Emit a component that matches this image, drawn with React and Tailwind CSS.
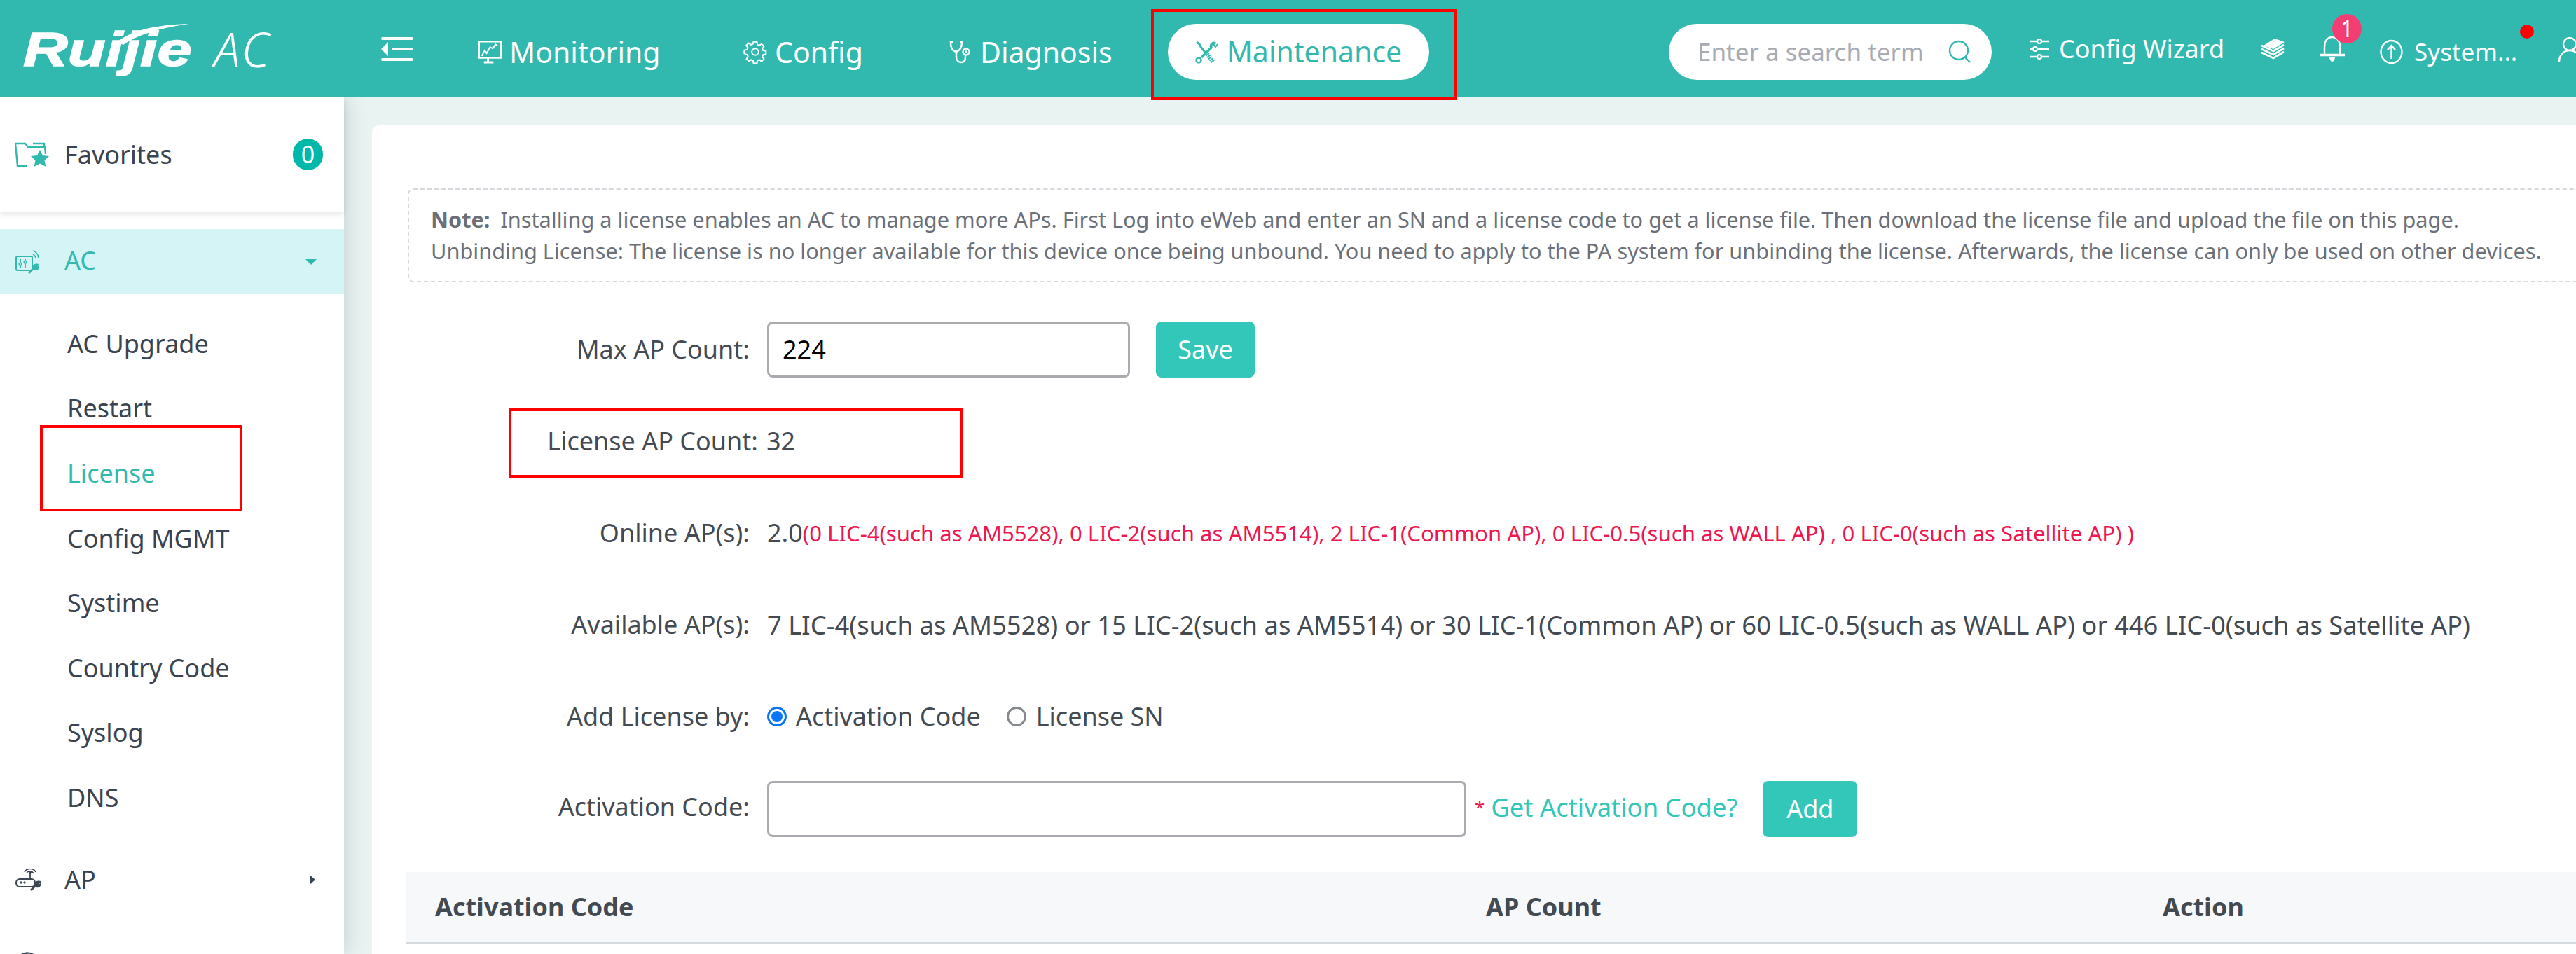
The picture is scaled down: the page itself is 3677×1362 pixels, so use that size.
import React from "react";

const Ico = ({ w, h, vb, children, className = "" }) => (
  <svg width={w} height={h} viewBox={vb} fill="none" stroke="currentColor" className={`shrink-0 ${className}`}>{children}</svg>
);

const MonitorIcon = () => (
  <Ico w={33} h={33} vb="0 0 34 33">
    <path d="M1 1h32v24H1z" strokeWidth="2" />
    <path d="M5 22l4-8 3 4 5-9 4 2 4-6 3 2" strokeWidth="2" />
    <path d="M14 25v5M8 31.500h14" strokeWidth="3" />
  </Ico>
);
const GearIcon = () => (
  <Ico w={34} h={34} vb="0 0 24 24">
    <circle cx="12" cy="12" r="3.4" strokeWidth="1.4" />
    <path strokeWidth="1.4" d="M10.3 2h3.4l.5 2.8 1.9.8 2.3-1.6 2.4 2.4-1.6 2.3.8 1.9 2.8.5v3.4l-2.8.5-.8 1.9 1.6 2.3-2.4 2.4-2.3-1.6-1.9.8-.5 2.8h-3.4l-.5-2.8-1.9-.8-2.3 1.6-2.4-2.4 1.6-2.3-.8-1.9L1 13.700v-3.4l2.8-.5.8-1.9L3 5.600 5.400 3.200l2.300 1.600 1.900-.8z" />
  </Ico>
);
const StethoIcon = () => (
  <Ico w={34} h={34} vb="0 0 34 34">
    <path strokeWidth="2.4" d="M6 3H3c0 7 1 12 8 14 6-2 8-7 8-14h-3" />
    <path strokeWidth="2.4" d="M11 17v8c0 4 3 7 7 7s6-3 6-7v-3" />
    <circle cx="25" cy="17" r="4.5" strokeWidth="2.4" />
    <circle cx="25" cy="17" r="1" strokeWidth="1.5" />
  </Ico>
);
const ToolsIcon = () => (
  <Ico w={32} h={33} vb="0 0 32 33">
    <path strokeWidth="3" d="M2 2l4 3 2 4 8 10" />
    <path strokeWidth="3.500" d="M29 4c-4-2-8 2-6 6L9 24" />
    <path strokeWidth="2" d="M29 2l-3 4 3 3 3-4" />
    <circle cx="5" cy="28" r="3.500" strokeWidth="2.500" />
    <path strokeWidth="6" strokeDasharray="2 1" d="M17 19l9 12" />
  </Ico>
);
const SlidersIcon = () => (
  <Ico w={30} h={32} vb="0 0 30 32">
    <path strokeWidth="2.6" d="M1 5h11M18 5h11M1 16h5M12 16h17M1 27h11M18 27h11" />
    <circle cx="15" cy="5" r="3" strokeWidth="2.2" />
    <circle cx="9" cy="16" r="3" strokeWidth="2.2" />
    <circle cx="15" cy="27" r="3" strokeWidth="2.2" />
  </Ico>
);
const StackIcon = () => (
  <Ico w={37} h={30} vb="0 0 37 30">
    <path fill="currentColor" stroke="none" d="M22 0l14 5-16 10-14-5z" />
    <path strokeWidth="2.800" d="M3 10l17 8 15-9M3 15l17 8 15-9M3 20l17 8 15-9" />
  </Ico>
);
const BellIcon = () => (
  <Ico w={36} h={37} vb="0 0 36 37">
    <path strokeWidth="2.4" d="M7 27V15C7 8 11 2 18 2s11 6 11 13v12" />
    <path strokeWidth="3.5" d="M0 27.500h36" />
    <path fill="currentColor" stroke="none" d="M14 30h8c0 4-2 7-4 7s-4-3-4-7z" />
  </Ico>
);
const UpIcon = () => (
  <Ico w={33} h={36} vb="0 0 33 36">
    <ellipse cx="16.500" cy="18" rx="15" ry="16" strokeWidth="2.4" />
    <path strokeWidth="2.4" d="M16.500 28V10M11 15l5.500-6 5.500 6" />
  </Ico>
);
const UserIcon = () => (
  <Ico w={34} h={38} vb="0 0 34 38">
    <circle cx="17" cy="12" r="9" strokeWidth="2.4" />
    <path strokeWidth="2.4" d="M2 37c0-9 6-16 15-16s15 7 15 16" />
  </Ico>
);
const SearchIcon = () => (
  <Ico w={34} h={34} vb="0 0 34 34" className="text-[#32b9af]">
    <circle cx="15" cy="15" r="13" strokeWidth="2.4" />
    <path strokeWidth="2.4" d="M24 25l7 7" />
  </Ico>
);
const FavIcon = () => (
  <svg width="50" height="36" viewBox="0 0 50 36" fill="none" className="shrink-0 text-[#32b9af]">
    <path stroke="currentColor" strokeWidth="2.4" d="M18 34H4L1 2h14l4 5h24l1 10M26 2h16v5" />
    <path fill="currentColor" d="M36 11l4 8 9 1-6.500 6 2 9-8.500-4.500-8.500 4.500 2-9-6.500-6 9-1z" />
  </svg>
);
const AcIcon = () => (
  <svg width="34" height="34" viewBox="0 0 34 34" fill="none" stroke="#32b9af" className="shrink-0">
    <rect x="1" y="9" width="23" height="20" rx="2" strokeWidth="2" />
    <path strokeWidth="1.800" d="M7 13v12M14 13v12" />
    <circle cx="7" cy="20" r="1.800" strokeWidth="1.500" fill="#d5f4f5" />
    <circle cx="14" cy="17" r="1.800" strokeWidth="1.500" fill="#d5f4f5" />
    <path strokeWidth="1.600" d="M25 6c2 1 4 3 4 6M25 1c4 1 8 5 8 11" />
    <path strokeWidth="3" d="M19 33l8-8" />
    <path strokeWidth="2.500" d="M25 25c0-3 3-5 7-4l-3 3 1 2 3-2c0 3-4 5-7 3" fill="#32b9af" />
  </svg>
);
const ApIcon = () => (
  <svg width="36" height="32" viewBox="0 0 36 32" fill="none" stroke="#3d4653" className="shrink-0">
    <rect x="1" y="15" width="27" height="11" rx="5" strokeWidth="2" />
    <path strokeWidth="1.800" d="M21 15V7" />
    <circle cx="21" cy="6" r="1.500" fill="#3d4653" />
    <path strokeWidth="1.600" d="M16 7c1-4 8-4 10 0M13 5c3-6 13-6 16 0" />
    <circle cx="8" cy="20" r="1.200" fill="#3d4653" />
    <circle cx="13" cy="20" r="1.200" fill="#3d4653" />
    <path strokeWidth="3" d="M22 31l8-8" />
    <path strokeWidth="2.500" d="M28 23c0-3 3-5 7-4l-3 3 1 2 2-1c0 3-4 4-7 2" fill="#3d4653" />
  </svg>
);

const NavItem = ({ icon, children, className }) => (
  <div className={`mt-[9px] flex items-center gap-[11px] text-[41px] leading-none text-white ${className}`}>
    {icon}
    <span>{children}</span>
  </div>
);

const SubItem = ({ children, active }) => (
  <div className={`h-[92.600px] flex items-center pl-[96px] pt-[1px] text-[36px] ${active ? "text-[#32b9af]" : "text-[#3a4350]"}`}>{children}</div>
);

const Row = ({ label, children, labelClass = "", className = "" }) => (
  <div className={`flex items-center h-[80px] ${className}`}>
    <div className={`w-[488px] text-right text-[36px] text-[#444a52] shrink-0 ${labelClass}`}>{label}</div>
    <div className="ml-[25px] flex items-center text-[36px] text-[#444a52] whitespace-nowrap">{children}</div>
  </div>
);

export default function App() {
  return (
    <div className="relative h-[1362px] w-[3677px] overflow-hidden flex flex-col font-['Noto_Sans',sans-serif] bg-[#e9f3f2]">
      <header className="h-[139px] shrink-0 bg-[#32b9af] flex items-center text-white relative z-10">
        <div className="relative ml-[33px] w-[240px] h-[72px] shrink-0">
          <svg width="110" height="30" viewBox="0 0 110 30" className="absolute left-[135px] top-0" fill="white">
            <path d="M0 26C20 8 60 1 102 0 66 5 30 14 8 30z" />
          </svg>
          <span className="absolute left-0 top-[2px] origin-left scale-x-[1.3] text-[68px] leading-none font-bold italic [-webkit-text-stroke:1.500px_white] font-['Liberation_Sans',sans-serif]">Ruijie</span>
        </div>
        <span className="ml-[32px] text-[68px] leading-none italic font-light tracking-[3px] w-[90px] shrink-0">AC</span>
        <svg width="46" height="34" viewBox="0 0 46 34" fill="white" className="ml-[149px] shrink-0">
          <rect x="0" y="0" width="46" height="4" rx="2" />
          <rect x="15" y="15" width="31" height="4" rx="2" />
          <rect x="0" y="30" width="46" height="4" rx="2" />
          <path d="M10 7v20L0 17z" />
        </svg>
        <NavItem icon={<MonitorIcon />} className="ml-[93px] w-[258px]">Monitoring</NavItem>
        <NavItem icon={<GearIcon />} className="ml-[120px] w-[184px]">Config</NavItem>
        <NavItem icon={<StethoIcon />} className="ml-[122px] w-[230px]">Diagnosis</NavItem>
        <div className="mt-[9px] ml-[83px] w-[373px] h-[80px] rounded-full bg-white flex items-center justify-center gap-[13px] text-[#32b9af] text-[41px] shrink-0">
          <ToolsIcon />
          <span>Maintenance</span>
        </div>
        <div className="mt-[9px] ml-[342px] w-[461px] h-[80px] rounded-full bg-white flex items-center justify-between pl-[41px] pr-[28px] shrink-0">
          <span className="text-[35px] text-[#a8abb2] whitespace-nowrap">Enter a search term</span>
          <SearchIcon />
        </div>
        <div className="ml-[53px] flex items-center gap-[13px] text-[36px] whitespace-nowrap shrink-0">
          <SlidersIcon />
          <span>Config Wizard</span>
        </div>
        <div className="ml-[50px] shrink-0"><StackIcon /></div>
        <div className="ml-[49px] shrink-0 relative">
          <BellIcon />
          <div className="absolute left-[18px] top-[-31px] w-[42px] h-[42px] rounded-full bg-[#f23e72] text-[32px] leading-[42px] text-center">1</div>
        </div>
        <div className="mt-[9px] ml-[50px] flex items-center gap-[16px] text-[35px] whitespace-nowrap shrink-0 relative">
          <UpIcon />
          <span>System...</span>
          <div className="absolute left-[200px] top-[-13px] w-[20px] h-[20px] rounded-full bg-[#ff0000]" />
        </div>
        <div className="ml-[58px] shrink-0"><UserIcon /></div>
      </header>

      <div className="flex flex-1 min-h-0">
        <aside className="w-[491px] shrink-0 bg-white shadow-[0_0_30px_rgba(60,90,90,0.25)] flex flex-col">
          <div className="h-[163px] shrink-0 flex items-center pl-[21px] pr-[30px] shadow-[0_4px_8px_rgba(0,0,0,0.1)]">
            <FavIcon />
            <span className="ml-[21px] text-[36px] text-[#3a4350]">Favorites</span>
            <div className="ml-auto w-[43px] h-[45px] rounded-full bg-[#00b8a9] text-white text-[34px] leading-[45px] text-center">0</div>
          </div>
          <div className="mt-[25px] h-[93px] shrink-0 bg-[#d5f4f5] flex items-center pl-[22px] text-[#32b9af] text-[36px]">
            <AcIcon />
            <span className="ml-[36px] -mt-[3px]">AC</span>
            <div className="ml-auto mr-[39px] w-0 h-0 border-x-[8px] border-x-transparent border-t-[8px] border-t-[#32b9af]" />
          </div>
          <div className="mt-[24px] shrink-0">
            <SubItem>AC Upgrade</SubItem>
            <SubItem>Restart</SubItem>
            <SubItem active>License</SubItem>
            <SubItem>Config MGMT</SubItem>
            <SubItem>Systime</SubItem>
            <SubItem>Country Code</SubItem>
            <SubItem>Syslog</SubItem>
            <SubItem>DNS</SubItem>
          </div>
          <div className="mt-[25px] h-[93px] shrink-0 flex items-center pl-[22px] text-[#3a4350] text-[36px]">
            <ApIcon />
            <span className="ml-[34px]">AP</span>
            <div className="ml-auto mr-[41px] w-0 h-0 border-y-[7px] border-y-transparent border-l-[8px] border-l-[#3a4350]" />
          </div>
          <div className="mt-[26px] h-[93px] shrink-0 flex items-center pl-[22px] text-[#3a4350] text-[36px]">
            <svg width="34" height="40" viewBox="0 0 30 30" fill="none" stroke="#3d4653" strokeWidth="2" className="shrink-0">
              <circle cx="15" cy="15" r="13" />
              <path d="M2 15h26M15 2c-6 6-6 20 0 26" />
            </svg>
            <span className="ml-[36px]">System</span>
          </div>
        </aside>

        <main className="flex-1 min-w-0 pl-[40px] pt-[40px]">
          <div className="h-full bg-white rounded-tl-[10px] pl-[51px] pt-[90px]">
            <div className="h-[134px] border-2 border-r-0 border-dashed border-[#d5d9de] rounded-l-[8px] pl-[31px] flex flex-col justify-center text-[30.700px] leading-[45px] text-[#6b7078] whitespace-nowrap">
              <div><span className="font-bold mr-[15px]">Note:</span>Installing a license enables an AC to manage more APs. First Log into eWeb and enter an SN and a license code to get a license file. Then download the license file and upload the file on this page.</div>
              <div>Unbinding License: The license is no longer available for this device once being unbound. You need to apply to the PA system for unbinding the license. Afterwards, the license can only be used on other devices.</div>
            </div>

            <div className="mt-[56px] flex flex-col gap-[51px]">
              <Row label="Max AP Count:">
                <div className="w-[518px] h-[80px] border-[3px] border-[#a9abb0] rounded-[8px] flex items-center pl-[19px] text-black">224</div>
                <div className="ml-[37px] w-[141px] h-[80px] rounded-[8px] bg-[#33c7ba] text-white flex items-center justify-center">Save</div>
              </Row>
              <Row label="License AP Count:" labelClass="relative left-[12px]"><span className="-ml-[1px]">32</span></Row>
              <Row label="Online AP(s):">
                <span>2.0</span>
                <span className="text-[31.150px] text-[#f0164f]">(0 LIC-4(such as AM5528), 0 LIC-2(such as AM5514), 2 LIC-1(Common AP), 0 LIC-0.5(such as WALL AP) , 0 LIC-0(such as Satellite AP) )</span>
              </Row>
              <Row label="Available AP(s):"><span className="text-[36.400px]">7 LIC-4(such as AM5528) or 15 LIC-2(such as AM5514) or 30 LIC-1(Common AP) or 60 LIC-0.5(such as WALL AP) or 446 LIC-0(such as Satellite AP)</span></Row>
              <Row label="Add License by:">
                <div className="w-[28px] h-[28px] rounded-full border-[3px] border-[#0a76f5] flex items-center justify-center">
                  <div className="w-[16px] h-[16px] rounded-full bg-[#0a76f5]" />
                </div>
                <span className="ml-[13px]">Activation Code</span>
                <div className="ml-[37px] w-[28px] h-[28px] rounded-full border-[3px] border-[#85888c]" />
                <span className="ml-[14px]">License SN</span>
              </Row>
            </div>
            <div className="mt-[52px]">
              <Row label="Activation Code:" labelClass="-mt-[6px]">
                <div className="w-[998px] h-[80px] border-[3px] border-[#a9abb0] rounded-[8px]" />
                <span className="ml-[12px] -mt-[6px] text-[26px] text-[#f0164f]">*</span>
                <span className="ml-[9px] -mt-[6px] text-[36.400px] text-[#33c7ba]">Get Activation Code?</span>
                <div className="ml-[36px] w-[135px] h-[80px] rounded-[8px] bg-[#33c7ba] text-white flex items-center justify-center">Add</div>
              </Row>
            </div>
            <div className="mt-[50px] h-[103px] bg-[#f7f8fa] border-b-[3px] border-[#d4dadd] flex items-center text-[36px] font-bold text-[#444a52] -ml-[2px]">
              <div className="ml-[41px] w-[1500px]">Activation Code</div>
              <div className="w-[966px]">AP Count</div>
              <div>Action</div>
            </div>
          </div>
        </main>
      </div>

      <div className="absolute left-[1643px] top-[13px] w-[437px] h-[130px] border-[4px] border-[#ff0000] z-20" />
      <div className="absolute left-[57px] top-[607px] w-[289px] h-[123px] border-[4px] border-[#ff0000] z-20" />
      <div className="absolute left-[726px] top-[583px] w-[648px] h-[99px] border-[4px] border-[#ff0000] z-20" />
    </div>
  );
}
